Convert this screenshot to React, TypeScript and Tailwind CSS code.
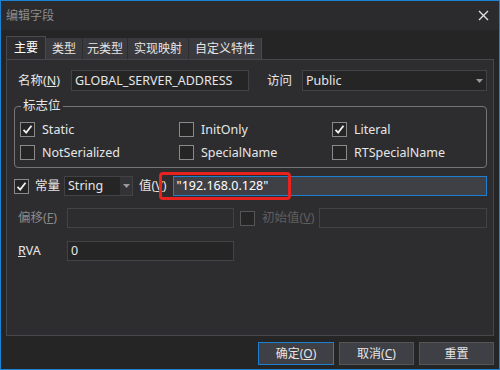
import React from 'react';

const font = { fontFamily: '"Noto Sans", "Noto Sans CJK SC", sans-serif' };

function Check({ checked, disabled }: { checked?: boolean; disabled?: boolean }) {
  return (
    <div className={`w-[15px] h-[15px] border flex items-center justify-center shrink-0 ${disabled ? 'border-[#555]' : 'border-[#8a8a8a]'} bg-[#252526]`}>
      {checked && (
        <svg width="11" height="11" viewBox="0 0 11 11">
          <path d="M1.5 5.8 L4.2 8.6 L9.5 1.8" fill="none" stroke="#f1f1f1" strokeWidth="1.8" />
        </svg>
      )}
    </div>
  );
}

function Flag({ label, checked }: { label: string; checked?: boolean }) {
  return (
    <div className="flex items-center gap-[7px] h-[15px]">
      <Check checked={checked} />
      <span className="text-[#e6e6e6]">{label}</span>
    </div>
  );
}

function Arrow() {
  return (
    <svg width="7" height="4" viewBox="0 0 7 4">
      <path d="M0 0 H7 L3.5 4 Z" fill="#999" />
    </svg>
  );
}

export default function App() {
  return (
    <div style={font} className="w-[500px] h-[370px] border border-[#1c83d4] bg-[#252526] flex flex-col text-[#e6e6e6] text-[12.5px] leading-[18px] select-none">
      <div className="h-[29px] bg-[#2b2b2d] flex items-center justify-between pl-[5px] pr-[10px] shrink-0">
        <span className="text-[12px] text-[#8c8c8c]">编辑字段</span>
        <svg width="11" height="11" viewBox="0 0 11 11">
          <path d="M1 1 L10 10 M10 1 L1 10" stroke="#e0e0e0" strokeWidth="1.4" />
        </svg>
      </div>

      <div className="flex-1 flex flex-col px-[5px] pt-[6px]">
        <div className="flex items-end h-[23px] text-[12px]">
          <div className="h-[23px] px-[7px] flex items-center bg-[#2d2d30] border border-b-0 border-[#4a4a4e] text-white">主要</div>
          <div className="h-[21px] px-[6px] flex items-center bg-[#3a3a3e] border-r border-[#2d2d30]">类型</div>
          <div className="h-[21px] px-[4px] flex items-center bg-[#3a3a3e] border-r border-[#2d2d30]">元类型</div>
          <div className="h-[21px] px-[6px] flex items-center bg-[#3a3a3e] border-r border-[#2d2d30]">实现映射</div>
          <div className="h-[21px] px-[6px] flex items-center bg-[#3a3a3e] border-r border-[#4a4a4e]">自定义特性</div>
        </div>

        <div className="w-[488px] h-[277px] border border-[#48484c] bg-[#2d2d30] flex flex-col pl-[7px] pr-[6px] pt-[10px]">
          <div className="flex items-center h-[21px]">
            <span className="w-[57px] pl-[4px]">名称(<span className="underline">N</span>)</span>
            <div className="w-[178px] h-[21px] border border-[#434346] bg-[#252526] flex items-center px-[3px]">GLOBAL_SERVER_ADDRESS</div>
            <span className="ml-[18px] w-[35px]">访问</span>
            <div className="flex-1 h-[21px] border border-[#434346] bg-[#252526] flex items-center">
              <span className="flex-1 px-[3px]">Public</span>
              <div className="w-[13px] h-full flex items-center justify-center"><Arrow /></div>
            </div>
          </div>

          <div className="relative mt-[15px] w-[473px] h-[62px] border-[1.5px] border-[#767676] rounded-[4px] pt-[15px] pl-[5px]">
            <span className="absolute -top-[10px] left-[6px] px-[2px] bg-[#2d2d30]">标志位</span>
            <div className="grid grid-cols-[159px_153px_1fr] gap-y-[8px]">
              <Flag label="Static" checked />
              <Flag label="InitOnly" />
              <Flag label="Literal" checked />
              <Flag label="NotSerialized" />
              <Flag label="SpecialName" />
              <Flag label="RTSpecialName" />
            </div>
          </div>

          <div className="flex items-center h-[20px] mt-[8px]">
            <Check checked />
            <span className="ml-[6px] w-[29px]">常量</span>
            <div className="w-[69px] h-[20px] border border-[#434346] bg-[#252526] flex items-center">
              <span className="flex-1 px-[3px]">String</span>
              <div className="w-[12px] h-full bg-[#333337] flex items-center justify-center"><Arrow /></div>
            </div>
            <span className="ml-[6px] mr-[6px]">值(<span className="underline">V</span>)</span>
            <div className="relative flex-1 h-[20px] border border-[#1c7fd0] bg-[#3f3f46] flex items-center px-[3px] text-white">
              "192.168.0.128"
              <div className="absolute -left-[15px] -top-[5px] w-[132px] h-[28px] border-[3px] border-[#e8231f] rounded-[4px]" />
            </div>
          </div>

          <div className="flex items-center h-[20px] mt-[12px] text-[#8a8a8a]">
            <span className="w-[53px] pl-[4px]">偏移(<span className="underline">F</span>)</span>
            <div className="w-[167px] h-[20px] border border-[#434346] bg-[#2d2d30]" />
            <div className="ml-[6px]"><Check disabled /></div>
            <span className="ml-[7px] w-[57px] text-[#5e5e5e]">初始值(<span className="underline">V</span>)</span>
            <div className="flex-1 h-[20px] border border-[#434346] bg-[#2d2d30]" />
          </div>

          <div className="flex items-center h-[20px] mt-[13px]">
            <span className="w-[53px] pl-[4px]"><span className="underline">R</span>VA</span>
            <div className="w-[167px] h-[20px] border border-[#434346] bg-[#252526] flex items-center px-[3px]">0</div>
          </div>
        </div>

        <div className="flex justify-end gap-[5px] mt-[6px] text-[12px]">
          <div className="w-[76px] h-[23px] border border-[#1c7fd0] bg-[#3f3f46] flex items-center justify-center">确定(<span className="underline">O</span>)</div>
          <div className="w-[75px] h-[23px] border border-[#555] bg-[#3f3f46] flex items-center justify-center">取消(<span className="underline">C</span>)</div>
          <div className="w-[75px] h-[23px] border border-[#555] bg-[#3f3f46] flex items-center justify-center">重置</div>
        </div>
      </div>
    </div>
  );
}
